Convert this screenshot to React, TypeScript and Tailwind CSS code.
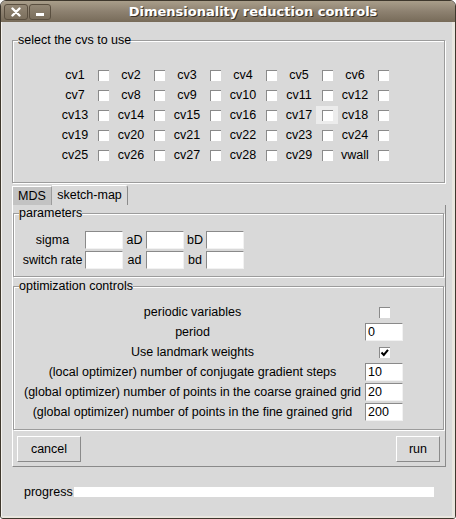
import type { ReactNode } from 'react';

const cvs = [...Array.from({ length: 29 }, (_, i) => `cv${i + 1}`), 'vwall'];

function CheckBox({ checked }: { checked?: boolean }) {
  return (
    <span className="flex h-[11px] w-[11px] items-center justify-center border-l border-t border-[#8a8a8a] bg-white">
      {checked && (
        <svg width="9" height="9" viewBox="0 0 9 9">
          <path d="M1.5 4.5 L3.8 7 L8 1.8" fill="none" stroke="#000" strokeWidth="2" />
        </svg>
      )}
    </span>
  );
}

function Entry({ value }: { value?: string }) {
  return (
    <div className="h-[18px] w-[38px] border-b border-l border-r border-t border-b-[#f2f2f2] border-l-[#8a8a8a] border-r-[#f2f2f2] border-t-[#8a8a8a] bg-white pl-[2px] leading-[16px]">
      {value}
    </div>
  );
}

function Frame({ label, className, children }: { label: string; className?: string; children: ReactNode }) {
  return (
    <fieldset
      className={`border border-[#9c9c9c] shadow-[inset_1px_1px_0_#fff,1px_1px_0_#fff] ${className ?? ''}`}
    >
      <legend className="ml-[5px] bg-[#d9d9d9] leading-[14px]">{label}</legend>
      {children}
    </fieldset>
  );
}

function Button({ children, className }: { children: ReactNode; className?: string }) {
  return (
    <button
      className={`h-[26px] border border-b-[#8a8a8a] border-l-white border-r-[#8a8a8a] border-t-white bg-[#d9d9d9] ${className ?? ''}`}
    >
      {children}
    </button>
  );
}

const optRows: { label: string; kind: 'check' | 'entry'; value?: string; checked?: boolean }[] = [
  { label: 'periodic variables', kind: 'check' },
  { label: 'period', kind: 'entry', value: '0' },
  { label: 'Use landmark weights', kind: 'check', checked: true },
  { label: '(local optimizer) number of conjugate gradient steps', kind: 'entry', value: '10' },
  { label: '(global optimizer) number of points in the coarse grained grid', kind: 'entry', value: '20' },
  { label: '(global optimizer) number of points in the fine grained grid', kind: 'entry', value: '200' },
];

export default function App() {
  return (
    <div className="flex h-[519px] w-[456px] flex-col overflow-hidden rounded-t-[6px] rounded-b-[3px] border border-[#3e372c] bg-[#d9d9d9] font-['Liberation_Sans',Arial,sans-serif] text-[12.5px] text-black">
      {/* title bar */}
      <div className="flex h-[21px] items-center bg-gradient-to-b from-[#a99e8a] via-[#8d8170] to-[#776b59] pl-[3px]">
        <div className="flex h-[16px] w-[24px] items-center justify-center rounded-[3px] border border-[#5a4f40] bg-gradient-to-b from-[#938775] to-[#7a6e5c]">
          <svg width="10" height="10" viewBox="0 0 10 10">
            <path d="M1.5 1.5 L8.5 8.5 M8.5 1.5 L1.5 8.5" stroke="#fff" strokeWidth="2.4" strokeLinecap="round" />
          </svg>
        </div>
        <div className="ml-[1px] flex h-[16px] w-[22px] items-end justify-center rounded-[3px] border border-[#5a4f40] bg-gradient-to-b from-[#938775] to-[#7a6e5c] pb-[3px]">
          <div className="h-[3px] w-[8px] bg-white" />
        </div>
        <div className="flex-1 text-center font-['DejaVu_Sans',sans-serif] text-[13px] font-bold text-white [text-shadow:1px_1px_0_#3b3226]">
          Dimensionality reduction controls
        </div>
      </div>

      {/* body */}
      <div className="flex flex-1 flex-col border-l border-r-[3px] border-b-[2px] border-l-[#f4f2ee] border-r-[#e9e6df] border-b-[#e9e6df] pl-[10px] pt-[11px]">
        <Frame label="select the cvs to use" className="w-[433px] pb-[17px]">
          <div className="pl-[45px] pt-[18px]">
            {[0, 1, 2, 3, 4].map((r) => (
              <div key={r} className="flex h-[20px] items-center">
                {cvs.slice(r * 6, r * 6 + 6).map((cv) => (
                  <div key={cv} className="flex w-[56px] items-center">
                    <span className="w-[34px] text-center">{cv}</span>
                    <span
                      className={`flex h-[18px] w-[22px] items-center justify-center ${cv === 'cv17' ? 'bg-[#ececec]' : ''}`}
                    >
                      <CheckBox />
                    </span>
                  </div>
                ))}
              </div>
            ))}
          </div>
        </Frame>

        {/* notebook */}
        <div className="mt-[2px] w-[434px]">
          <div className="flex h-[20px] items-end">
            <div className="flex h-[19px] w-[40px] items-center justify-center border-l border-r border-t border-l-white border-r-[#9c9c9c] border-t-white bg-[#c3c3c3]">
              MDS
            </div>
            <div className="flex h-[20px] w-[76px] items-center justify-center rounded-tr-[3px] border-r border-t border-r-[#8a8a8a] border-t-white">
              sketch-map
            </div>
          </div>
          <div className="flex flex-col border-b border-l border-r border-b-[#8a8a8a] border-l-white border-r-[#8a8a8a] pr-[1px] pt-[1px]">
            <Frame label="parameters" className="pb-[5px]">
              <div className="flex flex-col pl-[6px] pt-[11px]">
                <div className="flex h-[20px] items-start">
                  <span className="w-[65px] text-center leading-[18px]">sigma</span>
                  <Entry />
                  <span className="w-[23px] text-center leading-[18px]">aD</span>
                  <Entry />
                  <span className="w-[22px] text-center leading-[18px]">bD</span>
                  <Entry />
                </div>
                <div className="flex h-[20px] items-start">
                  <span className="w-[65px] whitespace-nowrap text-center leading-[18px]">switch rate</span>
                  <Entry />
                  <span className="w-[23px] text-center leading-[18px]">ad</span>
                  <Entry />
                  <span className="w-[22px] text-center leading-[18px]">bd</span>
                  <Entry />
                </div>
              </div>
            </Frame>

            <Frame label="optimization controls" className="mt-[2px] pb-[7px]">
              <div className="flex flex-col pl-[6px] pt-[9px]">
                {optRows.map((row) => (
                  <div key={row.label} className="flex h-[20px] items-center">
                    <span className="w-[345px] whitespace-nowrap text-center">{row.label}</span>
                    <div className="flex w-[38px] justify-center">
                      {row.kind === 'check' ? <CheckBox checked={row.checked} /> : <Entry value={row.value} />}
                    </div>
                  </div>
                ))}
              </div>
            </Frame>

            <div className="mb-[4px] mt-[6px] flex justify-between pl-[4px] pr-[4px]">
              <Button className="w-[64px]">cancel</Button>
              <Button className="w-[44px]">run</Button>
            </div>
          </div>
        </div>

        <div className="mt-[16px] flex items-center pl-[12px]">
          <span className="w-[50px]">progress</span>
          <div className="h-[10px] w-[360px] bg-white" />
        </div>
      </div>
    </div>
  );
}
